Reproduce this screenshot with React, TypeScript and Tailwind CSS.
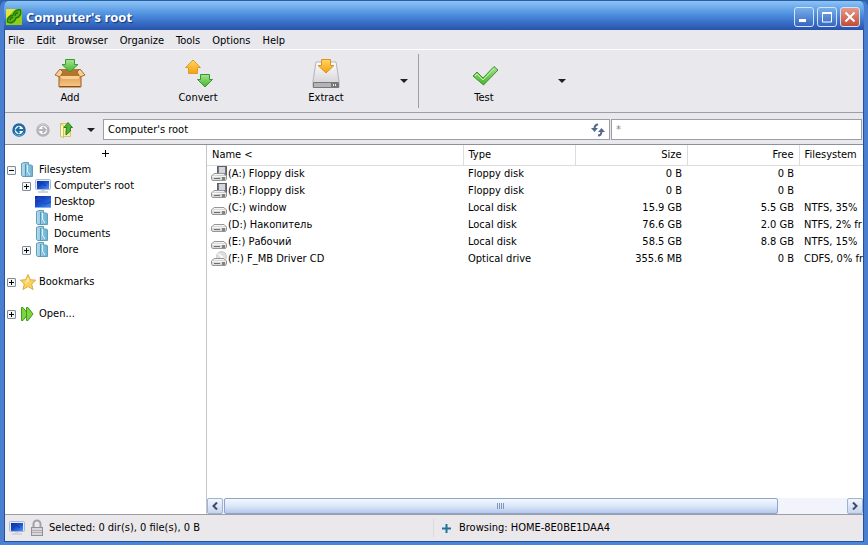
import React, { useState } from 'react';

type Drive = {
  icon: 'floppy' | 'disk' | 'optical';
  name: string;
  type: string;
  size: string;
  free: string;
  fs: string;
};

const drives: Drive[] = [
  { icon: 'floppy', name: '(A:) Floppy disk', type: 'Floppy disk', size: '0 B', free: '0 B', fs: '' },
  { icon: 'floppy', name: '(B:) Floppy disk', type: 'Floppy disk', size: '0 B', free: '0 B', fs: '' },
  { icon: 'disk', name: '(C:) window', type: 'Local disk', size: '15.9 GB', free: '5.5 GB', fs: 'NTFS, 35%' },
  { icon: 'disk', name: '(D:) Накопитель', type: 'Local disk', size: '76.6 GB', free: '2.0 GB', fs: 'NTFS, 2% fr' },
  { icon: 'disk', name: '(E:) Рабочий', type: 'Local disk', size: '58.5 GB', free: '8.8 GB', fs: 'NTFS, 15%' },
  { icon: 'optical', name: '(F:) F_MB Driver CD', type: 'Optical drive', size: '355.6 MB', free: '0 B', fs: 'CDFS, 0% fr' },
];

const menus = ['File', 'Edit', 'Browser', 'Organize', 'Tools', 'Options', 'Help'];

const Gradients = () => (
  <svg width="0" height="0" className="absolute" aria-hidden="true">
    <defs>
      <linearGradient id="green" x1="0" y1="0" x2="0" y2="1">
        <stop offset="0" stopColor="#a5e68f" />
        <stop offset="1" stopColor="#43b42c" />
      </linearGradient>
      <linearGradient id="orange" x1="0" y1="0" x2="0" y2="1">
        <stop offset="0" stopColor="#ffd75e" />
        <stop offset="1" stopColor="#f5a011" />
      </linearGradient>
      <linearGradient id="box" x1="0" y1="0" x2="0" y2="1">
        <stop offset="0" stopColor="#d98e3f" />
        <stop offset="1" stopColor="#f8c987" />
      </linearGradient>
      <linearGradient id="silver" x1="0" y1="0" x2="0" y2="1">
        <stop offset="0" stopColor="#fdfdfd" />
        <stop offset="1" stopColor="#cdcdd0" />
      </linearGradient>
      <linearGradient id="screen" x1="0" y1="0" x2="1" y2="1">
        <stop offset="0" stopColor="#0b2a94" />
        <stop offset="0.5" stopColor="#1b52cf" />
        <stop offset="1" stopColor="#4b93f5" />
      </linearGradient>
      <linearGradient id="folder" x1="0" y1="0" x2="1" y2="0">
        <stop offset="0" stopColor="#b5dcee" />
        <stop offset="1" stopColor="#6cafd0" />
      </linearGradient>
    </defs>
  </svg>
);

const LogoIcon = () => (
  <svg width="16" height="16" viewBox="0 0 16 16">
    <rect width="16" height="16" fill="#8fce16" />
    <path d="M0 0H9L0 10Z" fill="#e8e43a" />
    <path d="M1.500 13C1 9 3 7 7 6C8 2 12 0 14.500 1C15.500 5 14 8 10 9C9 13 5 15 1.500 13Z" fill="#5fb318" stroke="#1f7a0a" strokeWidth="1.400" />
    <path d="M4 11.500C4 9.500 5 8.500 7 8M9 7C9 5 10 4 12 3.500" stroke="#1f7a0a" strokeWidth="1.300" fill="none" />
  </svg>
);

const AddIcon = () => (
  <svg width="32" height="32" viewBox="0 0 32 32">
    <path d="M5 14H27V29H5Z" fill="url(#box)" stroke="#9c5c1c" />
    <path d="M6 11H26V18H6Z" fill="#b4752f" />
    <path d="M6 11L1 17L6 19L9 14ZM26 11L31 17L26 19L23 14Z" fill="#f6cf98" stroke="#a86a2a" />
    <path d="M6 18H26L24 21H8Z" fill="#f7cf95" />
    <path d="M6 28.500H26" stroke="#8c4c14" />
    <path d="M11.500 1.500H20.500V6.500H24L16 14L8 6.500H11.500Z" fill="url(#green)" stroke="#3a9a35" />
  </svg>
);

const ConvertIcon = () => (
  <svg width="32" height="32" viewBox="0 0 32 32">
    <path d="M11 2L18.500 9.500H15.500V15.500H6.500V9.500H3.500Z" fill="url(#orange)" stroke="#dc9b2c" />
    <path d="M18.500 16.500H27.500V21.500H30.500L23 29L15.500 21.500H18.500Z" fill="url(#green)" stroke="#379632" />
  </svg>
);

const ExtractIcon = () => (
  <svg width="32" height="32" viewBox="0 0 32 32">
    <path d="M6 4H26L29 23V29.500H3V23Z" fill="url(#silver)" stroke="#b4b4b8" />
    <rect x="3" y="24" width="26" height="6" rx="1" fill="#77777b" />
    <rect x="4" y="25" width="17" height="4" fill="#b4b4b8" />
    <path d="M23 27H27" stroke="#e6f0d0" strokeWidth="2" strokeDasharray="1 1" />
    <path d="M11.500 1.500H20.500V7.500H24L16 15L8 7.500H11.500Z" fill="url(#orange)" stroke="#d99427" />
  </svg>
);

const TestIcon = () => (
  <svg width="32" height="32" viewBox="0 0 32 32">
    <path d="M5 18L9 14L15 20L26 8.500L30 12L15.500 27Z" fill="url(#green)" stroke="#41912f" strokeLinejoin="round" />
    <path d="M7 18L9 16L15 22L26 10.500" stroke="#c9f2ae" fill="none" />
  </svg>
);

const ArrowCircle = ({ color, light, flip }: { color: string; light: string; flip?: boolean }) => (
  <svg width="16" height="16" viewBox="0 0 16 16">
    <g transform={flip ? 'rotate(180 8 8)' : undefined}>
      <circle cx="8" cy="8" r="5.500" fill="#fff" stroke={color} strokeWidth="2.500" />
      <path d="M3 11A6 6 0 0 0 13 11" stroke={light} fill="none" />
      <path d="M12 8H6M8.500 5L5.500 8L8.500 11" stroke={color} strokeWidth="2" fill="none" />
    </g>
  </svg>
);

const UpFolderIcon = () => (
  <svg width="16" height="16" viewBox="0 0 16 16">
    <path d="M1.500 1.500H9L11.500 4V14.500H1.500Z" fill="#f7efa4" stroke="#d6c768" />
    <path d="M1.500 1.500L4.500 4V15.500L1.500 14.500Z" fill="#fdf9cf" stroke="#cdbf62" />
    <path d="M9 0.500L13.500 5.500H11.500V9L7 13V10L7.500 5.500H5Z" fill="#4db432" stroke="#2c7d22" />
  </svg>
);

const CaretDown = () => (
  <svg width="8" height="4" viewBox="0 0 8 4">
    <path d="M0 0H8L4 4Z" fill="#202024" />
  </svg>
);

const RefreshIcon = () => (
  <svg width="14" height="14" viewBox="0 0 14 14">
    <path d="M7 1.500C4.500 1.500 3.500 3 3.500 6" stroke="#54688f" strokeWidth="2" fill="none" />
    <path d="M0 5H7L3.500 9Z" fill="#54688f" />
    <path d="M7 12.500C9.500 12.500 10.500 11 10.500 8" stroke="#54688f" strokeWidth="2" fill="none" />
    <path d="M7 9H14L10.500 5Z" fill="#54688f" />
  </svg>
);

const FolderIcon = () => (
  <svg width="16" height="16" viewBox="0 0 16 16">
    <path d="M1.500 1.500L4 0.500H8.500V3H11.500L12.500 4V14.500H2.500L1.500 13Z" fill="url(#folder)" stroke="#5d9fbd" />
    <path d="M5.500 2V15" stroke="#5596b4" />
    <path d="M7.500 3V10M8 10L10 13" stroke="#d9f0f8" />
  </svg>
);

const ComputerIcon = () => (
  <svg width="16" height="16" viewBox="0 0 16 16">
    <rect x="0.500" y="1.500" width="15" height="10" rx="1" fill="#e4ebf6" stroke="#a9b9d4" />
    <rect x="2" y="3" width="12" height="8" fill="url(#screen)" />
    <path d="M3 9L7 5L11 8" stroke="#123aa8" fill="none" />
    <path d="M6 12H10V13H13V15H3V13H6Z" fill="#d2d6dc" />
  </svg>
);

const DesktopIcon = () => (
  <svg width="16" height="16" viewBox="0 0 16 16">
    <rect x="0" y="2" width="16" height="12" fill="url(#screen)" />
    <path d="M0 6L5 4L10 10L16 8" stroke="#1f4fc4" strokeWidth="1.500" fill="none" />
    <path d="M0 13.500H16" stroke="#7eb0ef" />
  </svg>
);

const StarIcon = () => (
  <svg width="16" height="16" viewBox="0 0 16 16">
    <path d="M8 0.500L10.300 5.700L15.700 6.200L11.700 10L13 15.500L8 12.500L3 15.500L4.300 10L0.300 6.200L5.700 5.700Z" fill="#fbd35c" stroke="#d9a23a" strokeWidth="0.900" />
    <path d="M8 3L9 7L5 10Z" fill="#fdeeb0" />
  </svg>
);

const OpenIcon = () => (
  <svg width="16" height="16" viewBox="0 0 16 16">
    <path d="M1.500 1.500H3L8 8L3 14.500H1.500Z" fill="#7ed43c" stroke="#3f9a20" />
    <path d="M6.500 1.500H8L13 8L8 14.500H6.500Z" fill="#7ed43c" stroke="#3f9a20" />
  </svg>
);

const LockIcon = () => (
  <svg width="16" height="18" viewBox="0 0 16 18">
    <path d="M4.500 9V5A3.500 3.500 0 0 1 11.500 5V9" fill="none" stroke="#a2a2a6" strokeWidth="2" />
    <rect x="2.500" y="8.500" width="11" height="8" fill="#d6d6da" stroke="#929296" />
    <path d="M3 11.500H13M3 13.500H13" stroke="#b0b0b4" />
  </svg>
);

const DriveIcon = ({ kind }: { kind: Drive['icon'] }) => (
  <svg width="16" height="16" viewBox="0 0 16 16" className="shrink-0">
    {kind === 'optical' && (
      <>
        <circle cx="10.500" cy="5.500" r="5" fill="#dedce1" stroke="#c0bcc4" strokeWidth="0.700" />
        <path d="M10.500 5.500L7 2.500M10.500 5.500L14 9" stroke="#f5f3f7" strokeWidth="2" />
        <circle cx="10.500" cy="5.500" r="1" fill="#fff" />
      </>
    )}
    {kind === 'floppy' && (
      <>
        <rect x="6.500" y="0.500" width="9" height="11" fill="#70757c" stroke="#5e6268" />
        <rect x="8" y="1" width="6" height="6" fill="#d3d7dc" />
      </>
    )}
    <path d="M3 7.500H13L15.500 10V13L14.500 14.500H1.500L0.500 13V10Z" fill="#d6d6d6" fillOpacity="0.900" stroke="#969696" strokeLinejoin="round" />
    <path d="M3 8.500H13M1 10.500H15" stroke="#f4f4f4" />
    <path d="M3 12.500H9" stroke="#6f6f6f" />
    <rect x="11" y="11" width="3" height="3" fill="#7d8577" />
  </svg>
);

const Expander = ({ open }: { open?: boolean }) => (
  <button aria-label={open ? 'Collapse' : 'Expand'} className="flex h-[9px] w-[9px] shrink-0 items-center justify-center rounded-[1px] border border-[#7b8ba0] bg-[#f6f5f2]">
    <svg width="5" height="5" viewBox="0 0 5 5">
      <path d={open ? 'M0 2.500H5' : 'M0 2.500H5M2.500 0V5'} stroke="#000" />
    </svg>
  </button>
);

type NodeProps = { label: string; icon: React.ReactNode; expander?: 'open' | 'closed'; child?: boolean };

const TreeNode = ({ label, icon, expander, child }: NodeProps) => (
  <li className={`flex h-4 items-center ${child ? 'pl-[17px]' : 'pl-0.5'}`}>
    <span className="flex w-[13px] shrink-0">{expander && <Expander open={expander === 'open'} />}</span>
    {icon}
    <span className="pl-[3px]">{label}</span>
  </li>
);

const ToolButton = ({ label, icon }: { label: string; icon: React.ReactNode }) => (
  <button className="flex w-32 flex-col items-center pt-2">
    {icon}
    <span className="h-4 leading-4">{label}</span>
  </button>
);

const windowButton = 'flex h-5 w-5 items-center justify-center rounded-[3px] border border-[#d3e4fa]';

export default function App() {
  const [path, setPath] = useState("Computer's root");
  const [filter, setFilter] = useState('*');

  return (
    <div className="bg-[#2f62ad]">
      <div className="flex h-screen min-h-80 flex-col overflow-hidden rounded-t-lg border-x-4 border-t border-b-[3px] border-x-[#4a7fd0] border-t-[#2a5da8] border-b-[#4a86d8] bg-[#2a5da8] font-['DejaVu_Sans_Condensed','Noto_Sans',sans-serif] text-[11px] leading-4 text-black">
        <Gradients />
        <header className="flex h-[29px] shrink-0 items-center bg-linear-to-b from-[#8cc4f5] via-[#4a8bdc] to-[#2852ac] pt-0.5 pr-1 pl-0.5">
          <LogoIcon />
          <h1 className="flex-1 pl-1 font-[family-name:'Open_Sans',sans-serif] text-[13px] font-bold text-white [text-shadow:1px_1px_1px_#12337c]">Computer's root</h1>
          <div className="flex gap-[3px]">
            <button aria-label="Minimize" className={`${windowButton} bg-linear-to-b from-[#78aeea] to-[#3767c0]`}>
              <svg width="12" height="12" viewBox="0 0 12 12"><path d="M1 9.500H8" stroke="#fff" strokeWidth="3" /></svg>
            </button>
            <button aria-label="Maximize" className={`${windowButton} bg-linear-to-b from-[#78aeea] to-[#3767c0]`}>
              <svg width="12" height="12" viewBox="0 0 12 12"><path d="M1 1.500H11M1 2.500H11M1.500 1V11H10.500V1" stroke="#fff" fill="none" /></svg>
            </button>
            <button aria-label="Close" className={`${windowButton} bg-linear-to-b from-[#e29a8c] to-[#c44a34]`}>
              <svg width="12" height="12" viewBox="0 0 12 12"><path d="M1.500 1.500L10.500 10.500M10.500 1.500L1.500 10.500" stroke="#fff" strokeWidth="2" /></svg>
            </button>
          </div>
        </header>

        <div className="flex min-h-0 flex-1 flex-col border-x border-b border-[#2450a0] bg-[#e9e8ed]">
          <nav className="flex h-5 shrink-0 items-center gap-3 border-b border-white px-[3px] pt-0.5">
            {menus.map((menu) => (
              <button key={menu}>{menu}</button>
            ))}
          </nav>

          {/* Toolbar */}
          <div className="flex h-[63px] shrink-0 border-b border-[#9d9da5] pl-px">
            <ToolButton label="Add" icon={<AddIcon />} />
            <ToolButton label="Convert" icon={<ConvertIcon />} />
            <ToolButton label="Extract" icon={<ExtractIcon />} />
            <button aria-label="Extract options" className="flex w-7 items-center justify-center"><CaretDown /></button>
            <div className="my-1 mr-px w-px bg-[#9d9da5]" />
            <ToolButton label="Test" icon={<TestIcon />} />
            <button aria-label="Test options" className="flex w-7 items-center justify-center"><CaretDown /></button>
          </div>

          {/* Address bar */}
          <div className="flex h-8 shrink-0 items-center border-b border-[#8f8f97] pt-0.5 pr-px pl-1.5">
            <div className="flex w-[92px] shrink-0 items-center gap-2">
              <button aria-label="Back"><ArrowCircle color="#1c6ba5" light="#5cb0e0" /></button>
              <button aria-label="Forward"><ArrowCircle color="#b3b3b8" light="#d0d0d4" flip /></button>
              <button aria-label="Up"><UpFolderIcon /></button>
              <button aria-label="History" className="pl-1"><CaretDown /></button>
            </div>
            <div className="flex h-[21px] flex-1 items-center border border-[#9d9da5] bg-white pr-1">
              <input aria-label="Path" value={path} onChange={(e) => setPath(e.target.value)} className="min-w-0 flex-1 px-1 outline-none" />
              <button aria-label="Refresh"><RefreshIcon /></button>
            </div>
            <input aria-label="Filter" value={filter} onChange={(e) => setFilter(e.target.value)} className="ml-px h-[21px] w-[251px] border border-[#9d9da5] bg-white px-1 text-[#85858b] outline-none" />
          </div>

          <div className="flex min-h-0 flex-1 bg-white">
            <aside className="w-[202px] shrink-0 border-r border-[#c4c4ca]">
              <button className="block h-[17px] w-full" aria-label="New tab">
                <svg width="7" height="7" viewBox="0 0 7 7" className="mx-auto"><path d="M0 3.500H7M3.500 0V7" stroke="#000" /></svg>
              </button>
              <ul>
                <TreeNode label="Filesystem" icon={<FolderIcon />} expander="open" />
                <TreeNode label="Computer's root" icon={<ComputerIcon />} expander="closed" child />
                <TreeNode label="Desktop" icon={<DesktopIcon />} child />
                <TreeNode label="Home" icon={<FolderIcon />} child />
                <TreeNode label="Documents" icon={<FolderIcon />} child />
                <TreeNode label="More" icon={<FolderIcon />} expander="closed" child />
              </ul>
              <ul className="mt-4 flex flex-col gap-4">
                <TreeNode label="Bookmarks" icon={<StarIcon />} expander="closed" />
                <TreeNode label="Open..." icon={<OpenIcon />} expander="closed" />
              </ul>
            </aside>

            <main className="flex min-w-0 flex-1 flex-col">
              <div className="min-h-0 flex-1 overflow-hidden">
                <table className="w-full table-fixed border-collapse whitespace-nowrap">
                  <thead>
                    <tr className="h-5 border-b border-[#dcdce0] text-left">
                      <th className="w-64 border-r border-[#dcdce0] px-[5px] pt-px font-normal">Name &lt;</th>
                      <th className="w-28 border-r border-[#dcdce0] px-[5px] pt-px font-normal">Type</th>
                      <th className="w-28 border-r border-[#dcdce0] px-[5px] pt-px text-right font-normal">Size</th>
                      <th className="w-28 border-r border-[#dcdce0] px-[5px] pt-px text-right font-normal">Free</th>
                      <th className="pt-px pl-[5px] font-normal">Filesystem</th>
                    </tr>
                  </thead>
                  <tbody>
                    {drives.map((drive) => (
                      <tr key={drive.name} className="h-[17px]">
                        <td className="px-1">
                          <span className="flex items-center gap-px">
                            <DriveIcon kind={drive.icon} />
                            {drive.name}
                          </span>
                        </td>
                        <td className="px-[5px]">{drive.type}</td>
                        <td className="px-[5px] text-right">{drive.size}</td>
                        <td className="px-[5px] text-right">{drive.free}</td>
                        <td className="pl-[5px]">{drive.fs}</td>
                      </tr>
                    ))}
                  </tbody>
                </table>
              </div>
              <div className="flex h-4 shrink-0 gap-px bg-[#f1f4fb]">
                <button aria-label="Scroll left" className="flex w-4 items-center justify-center rounded-[2px] border border-[#9fb2d2] bg-linear-to-b from-[#f2f6fd] to-[#c6d5ef]">
                  <svg width="6" height="8" viewBox="0 0 6 8"><path d="M5 0.500L1.500 4L5 7.500" stroke="#3b4a66" strokeWidth="2" fill="none" /></svg>
                </button>
                <div className="flex flex-1">
                  <div className="flex w-[89%] items-center justify-center gap-px rounded-[2px] border border-[#8ea4c8] bg-linear-to-b from-[#f4f8fe] via-[#dbe7f9] to-[#b4c9ea]">
                    <span className="h-1.5 w-px bg-[#8195b5]" />
                    <span className="h-1.5 w-px bg-[#8195b5]" />
                    <span className="h-1.5 w-px bg-[#8195b5]" />
                    <span className="h-1.5 w-px bg-[#8195b5]" />
                  </div>
                </div>
                <button aria-label="Scroll right" className="flex w-4 items-center justify-center rounded-[2px] border border-[#9fb2d2] bg-linear-to-b from-[#f2f6fd] to-[#c6d5ef]">
                  <svg width="6" height="8" viewBox="0 0 6 8"><path d="M1 0.500L4.500 4L1 7.500" stroke="#3b4a66" strokeWidth="2" fill="none" /></svg>
                </button>
              </div>
            </main>
          </div>

          <footer className="flex h-[27px] shrink-0 items-center border-t border-[#9d9da5] bg-[#ebe8ec]">
            <div className="flex w-1/2 items-center gap-1 border-r border-[#dcdade] pl-1">
              <ComputerIcon />
              <LockIcon />
              <span>Selected: 0 dir(s), 0 file(s), 0 B</span>
            </div>
            <div className="flex items-center gap-2 pl-2">
              <svg width="9" height="9" viewBox="0 0 9 9"><path d="M0 4.500H9M4.500 0V9" stroke="#20739a" strokeWidth="2" /></svg>
              <span>Browsing: HOME-8E0BE1DAA4</span>
            </div>
          </footer>
        </div>
      </div>
    </div>
  );
}
